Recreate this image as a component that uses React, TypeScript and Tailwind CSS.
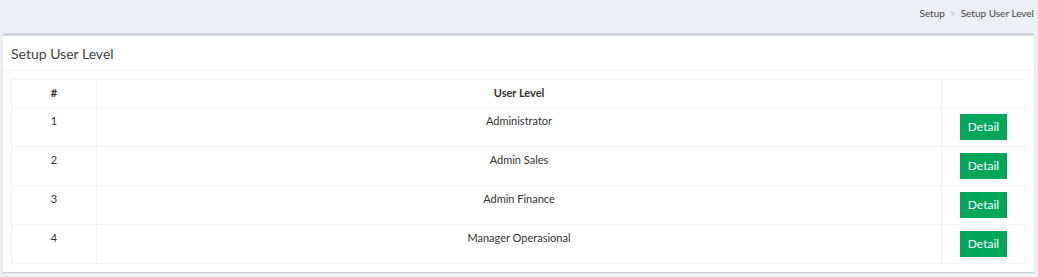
const levels = ["Administrator", "Admin Sales", "Admin Finance", "Manager Operasional"]

export default function App() {
  return (
    <div
      className="w-[1038px] h-[277px] bg-[#ecf0f5] text-[#333] overflow-hidden"
      style={{ fontFamily: "Lato, 'Noto Sans', sans-serif" }}
    >
      {/* Breadcrumb */}
      <div className="flex justify-end items-center h-[25px] pr-[4px] pt-[1px] text-[10px] text-[#444]">
        <span>Setup</span>
        <span className="px-[5px] text-[#bbb]">&gt;</span>
        <span>Setup User Level</span>
      </div>

      {/* Box */}
      <div className="mx-[3px] mt-[8px] w-[1031px] bg-white border-t-[3px] border-[#d2d6de] shadow-[0_1px_1px_rgba(0,0,0,0.15)]">
        <div className="h-[35px] flex items-center px-[8px] border-b border-[#f4f4f4]">
          <h3 className="text-[14px] text-[#444]">Setup User Level</h3>
        </div>
        <div className="px-[8px] pt-[8px] pb-[8px]">
          <table className="w-full border-collapse border border-[#f4f4f4] text-[11px]">
            <thead>
              <tr className="h-[28px]">
                <th className="w-[85px] border border-[#f4f4f4] font-bold text-center">#</th>
                <th className="border border-[#f4f4f4] font-bold text-center">User Level</th>
                <th className="w-[84px] border border-[#f4f4f4]"></th>
              </tr>
            </thead>
            <tbody>
              {levels.map((name, i) => (
                <tr key={name} className="h-[39px]">
                  <td className="border border-[#f4f4f4] text-center align-top pt-[5px]">{i + 1}</td>
                  <td className="border border-[#f4f4f4] text-center align-top pt-[5px]">{name}</td>
                  <td className="border border-[#f4f4f4] text-center align-top pt-[6px]">
                    <button className="w-[47px] h-[26px] bg-[#00a65a] text-white text-[12px]">Detail</button>
                  </td>
                </tr>
              ))}
            </tbody>
          </table>
        </div>
      </div>
    </div>
  )
}
